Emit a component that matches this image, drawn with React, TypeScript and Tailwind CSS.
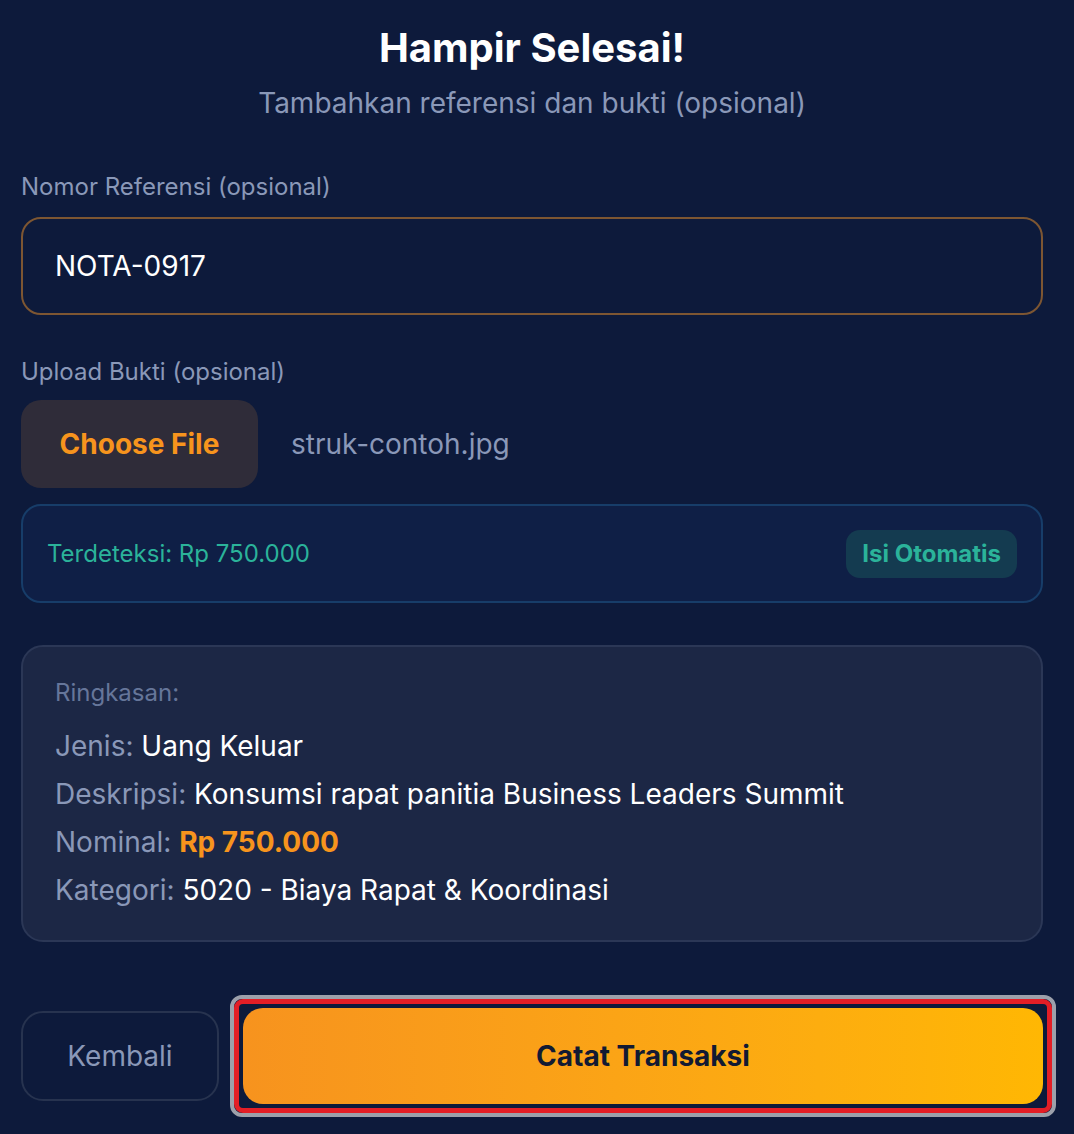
const Row = ({ label, children }: { label: string; children: React.ReactNode }) => (
  <div className="leading-[48px]">
    <span className="text-[#8a98b8]">{label} </span>
    {children}
  </div>
);

export default function App() {
  return (
    <div
      className="min-h-[1134px] w-full bg-[#0d1a3b] text-white"
      style={{ fontFamily: "Inter, 'Noto Sans', sans-serif" }}
    >
      <div className="ml-[21px] w-[1022px] pt-[20px]">
        <h1 className="text-center text-[40px] font-bold leading-[56px]">Hampir Selesai!</h1>
        <p className="mt-[7px] text-center text-[28px] leading-[40px] text-[#8a98b8]">
          Tambahkan referensi dan bukti (opsional)
        </p>

        <label className="mt-[48px] block text-[24px] leading-[32px] text-[#8a98b8]">
          Nomor Referensi (opsional)
        </label>
        <div className="mt-[14px] flex h-[98px] items-center rounded-[20px] border-2 border-[#7d5632] px-[32px] text-[28px]">
          NOTA-0917
        </div>

        <label className="mt-[41px] block text-[24px] leading-[32px] text-[#8a98b8]">
          Upload Bukti (opsional)
        </label>
        <div className="mt-[12px] flex items-center gap-[33px]">
          <button className="h-[88px] w-[237px] rounded-[20px] bg-[#2f2c39] text-[28px] font-bold text-[#f7941d]">
            Choose File
          </button>
          <span className="text-[28px] text-[#8a98b8]">struk-contoh.jpg</span>
        </div>

        <div className="mt-[16px] flex h-[99px] items-center justify-between rounded-[20px] border-2 border-[#173d69] bg-[#0f1f46] pl-[24px] pr-[24px]">
          <span className="text-[24px] text-[#2bb39a]">Terdeteksi: Rp 750.000</span>
          <button className="h-[48px] rounded-[14px] bg-[#143b50] px-[16px] text-[24px] font-bold text-[#2bb39a]">
            Isi Otomatis
          </button>
        </div>

        <div className="mt-[42px] rounded-[22px] border-2 border-[#2b3756] bg-[#1c2745] px-[32px] pb-[26px] pt-[28px] text-[28px]">
          <div className="mb-[11px] text-[24px] leading-[36px] text-[#66769a]">Ringkasan:</div>
          <Row label="Jenis:">Uang Keluar</Row>
          <Row label="Deskripsi:">Konsumsi rapat panitia Business Leaders Summit</Row>
          <Row label="Nominal:">
            <span className="font-bold text-[#f7941d]">Rp 750.000</span>
          </Row>
          <Row label="Kategori:">5020 - Biaya Rapat &amp; Koordinasi</Row>
        </div>

        <div className="mt-[66px] flex items-center gap-[24px]">
          <button className="h-[90px] w-[198px] rounded-[22px] border-2 border-[#27334f] text-[28px] text-[#8a98b8]">
            Kembali
          </button>
          <div className="relative flex-1">
            <button className="h-[96px] w-full rounded-[20px] bg-gradient-to-r from-[#f7931e] to-[#ffb703] text-[28px] font-bold text-[#121a33]">
              Catat Transaksi
            </button>
            <div className="pointer-events-none absolute -inset-[13px] rounded-[12px] border-4 border-[#9ca0ab]">
              <div className="h-full w-full rounded-[9px] border-[5px] border-[#e31e26]" />
            </div>
          </div>
        </div>
      </div>
    </div>
  );
}
